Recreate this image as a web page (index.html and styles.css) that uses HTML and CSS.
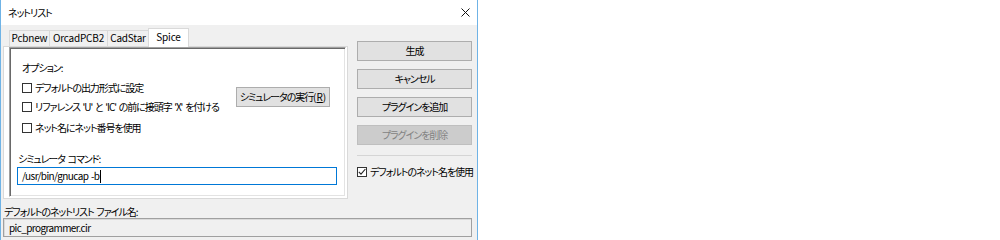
FILE: index.html
```html
<html>
  <head>
    <title>ネットリスト</title>
    <link rel="stylesheet" href="styles.css">
  </head>
  <body>
    <div class="window">
      <div class="titlebar">
        <span class="title">ネットリスト</span>
        <svg class="close" width="9" height="9" viewBox="0 0 9 9"><path d="M0.5 0.5 L8.5 8.5 M8.5 0.5 L0.5 8.5" stroke="#111" stroke-width="1" fill="none"/></svg>
      </div>

      <div class="content">
        <div class="notebook">
          <div class="tabs">
            <div class="tab t-pcbnew">Pcbnew</div>
            <div class="tab t-orcad">OrcadPCB2</div>
            <div class="tab t-cadstar">CadStar</div>
            <div class="tab t-spice selected">Spice</div>
          </div>
          <div class="page">
            <div class="sunken">
              <div class="options-label">オプション:</div>
              <div class="options">
                <div class="checks">
                  <div class="check"><span class="box"></span>デフォルトの出力形式に設定</div>
                  <div class="check"><span class="box"></span>リファレンス 'U' と 'IC' の前に接頭字 'X' を付ける</div>
                  <div class="check third"><span class="box"></span>ネット名にネット番号を使用</div>
                </div>
                <div class="btn run">シミュレータの実行<span class="mnemonic">(<u>R</u>)</span></div>
              </div>
              <div class="cmd-label">シミュレータ コマンド:</div>
              <div class="cmd-input latin">/usr/bin/gnucap -b<span class="caret"></span></div>
            </div>
          </div>
        </div>

        <div class="side">
          <div class="btn">生成</div>
          <div class="btn">キャンセル</div>
          <div class="btn">プラグインを追加</div>
          <div class="btn disabled">プラグインを削除</div>
          <div class="sep"></div>
          <div class="check side-check"><span class="box"><svg width="8" height="8" viewBox="0 0 8 8"><path d="M0.8 3.8 L3 6.2 L7.4 1" stroke="#222" stroke-width="1.1" fill="none"/></svg></span>デフォルトのネット名を使用</div>
        </div>
      </div>

      <div class="file-label">デフォルトのネットリスト ファイル名:</div>
      <div class="file-input latin">pic_programmer.cir</div>
    </div>
  </body>
</html>
```

FILE: styles.css
```css
html{
  width:100%;
  height:100%;
}
body{
  margin:0;
  background:#fff;
  color:#000;
  font-family:"Noto Sans CJK JP", "Noto Sans", sans-serif;
  font-feature-settings:"palt";
  font-size:10px;
  line-height:13px;
  letter-spacing:-1.05px;
  word-spacing:1.5px;
}
.latin{
  letter-spacing:-0.6px;
  word-spacing:1px;
}
.window{
  width:478px;
  height:240px;
  box-sizing:border-box;
  border-left:1px solid #6fb3e6;
  border-right:1px solid #6fb3e6;
  background:#f0f0f0;
  display:flex;
  flex-direction:column;
  overflow:hidden;
}
.titlebar{
  height:25px;
  flex:none;
  background:#fff;
  display:flex;
  align-items:center;
  justify-content:space-between;
  padding:0 7px 0 7px;
}
.close{
  display:block;
}

.content{
  display:flex;
  padding:3px 5px 0 2px;
}

/* notebook */
.notebook{
  width:345px;
  flex:none;
}
.tabs{
  display:flex;
  align-items:flex-end;
  height:18px;
  padding-left:6px;
}
.tab{
  box-sizing:border-box;
  height:16px;
  line-height:14px;
  border:1px solid #d9d9d9;
  border-bottom:none;
  background:#f0f0f0;
  text-align:center;
  margin-left:-1px;
  letter-spacing:-0.2px;
}
.t-pcbnew{ width:41px; margin-left:0; }
.t-orcad{ width:59px; }
.t-cadstar{ width:42px; }
.t-spice{ width:41px; }
.tab.selected{
  height:19px;
  line-height:16px;
  background:#fff;
  margin-bottom:-1px;
  position:relative;
  z-index:1;
}
.page{
  height:153px;
  box-sizing:border-box;
  border:1px solid #d9d9d9;
  background:#fff;
  padding:0 1px 1px 5px;
}
.sunken{
  height:150px;
  box-sizing:border-box;
  border:1px solid;
  border-color:#a0a0a0 #fff #fff #a0a0a0;
  box-shadow:inset 1px 1px #696969, inset -1px -1px #e3e3e3;
}
.options-label{
  margin:13px 0 0 12px;
}
.options{
  display:flex;
  margin:7px 0 0 12px;
}
.checks{
  width:214px;
  display:flex;
  flex-direction:column;
  gap:6px;
}
.check{
  display:flex;
  align-items:center;
  white-space:pre;
}
.check.third{
  margin-top:2px;
}
.box{
  width:10px;
  height:10px;
  box-sizing:border-box;
  border:1px solid #333;
  background:#fff;
  margin-right:3px;
  display:flex;
  align-items:center;
  justify-content:center;
  flex:none;
}
.btn{
  box-sizing:border-box;
  height:20px;
  line-height:18px;
  border:1px solid #adadad;
  background:#e1e1e1;
  text-align:center;
  white-space:nowrap;
}
.mnemonic{
  letter-spacing:0;
}
.btn u{
  text-underline-offset:1px;
}
.run{
  width:94px;
  margin-top:6px;
}
.cmd-label{
  margin:18px 0 0 8px;
}
.cmd-input{
  margin:2px 0 0 7px;
  width:320px;
  height:18px;
  box-sizing:border-box;
  border:1px solid #0078d7;
  background:#fff;
  padding-left:4px;
  line-height:16px;
  display:flex;
  align-items:center;
  white-space:pre;
}
.caret{
  width:1px;
  height:13px;
  background:#000;
  margin-left:1px;
}

/* right column */
.side{
  width:115px;
  margin-left:9px;
  flex:none;
  display:flex;
  flex-direction:column;
  gap:8px;
  padding-top:13px;
}
.btn.disabled{
  background:#cccccc;
  border-color:#bfbfbf;
  color:#838383;
}
.sep{
  height:1px;
  background:#d5d5d5;
  margin-top:2px;
}
.side-check{
  margin-top:1px;
}

/* bottom */
.file-label{
  margin:6px 0 0 3px;
}
.file-input{
  margin-left:2px;
  width:469px;
  height:19px;
  box-sizing:border-box;
  border:1px solid #a0a0a0;
  box-shadow:inset 1px 1px #dadada;
  background:#f0f0f0;
  padding-left:5px;
  line-height:17px;
}
```
